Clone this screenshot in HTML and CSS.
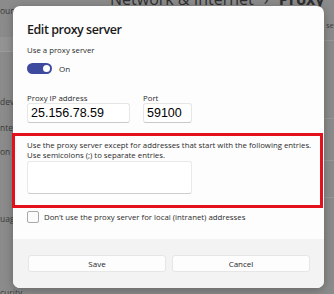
FILE: index.html
```html
<!DOCTYPE html>
<html>
<head>
<meta charset="utf-8">
<link rel="stylesheet" href="styles.css">
</head>
<body>
<div class="page">
  <nav class="nav">
    <div class="nav-item n-acc">ounts</div>
    <div class="nav-search"></div>
    <div class="nav-item n-dev">devices</div>
    <div class="nav-item n-net">nternet</div>
    <div class="nav-item n-pers">on</div>
    <div class="nav-item n-lang">uage</div>
    <div class="nav-item n-sec">curity</div>
  </nav>
  <main class="content">
    <h1 class="crumb">Network &amp; Internet <span class="sep">›</span> <b>Proxy</b></h1>
    <div class="intro">settings</div>
    <div class="card c1"></div>
    <div class="card c2"></div>
    <div class="card c3"></div>
    <div class="card c4"></div>
  </main>
</div>

<div class="dialog">
  <div class="dlg-body">
    <div class="dlg-title">Edit proxy server</div>
    <div class="label first">Use a proxy server</div>
    <div class="toggle-row">
      <span class="toggle"><span class="knob"></span></span>
      <span class="toggle-text">On</span>
    </div>
    <div class="fields">
      <div class="field">
        <div class="label">Proxy IP address</div>
        <div class="input ip">25.156.78.59</div>
      </div>
      <div class="field">
        <div class="label">Port</div>
        <div class="input port">59100</div>
      </div>
    </div>
    <div class="highlight">
      <div class="desc">Use the proxy server except for addresses that start with the following entries.<br>Use semicolons (;) to separate entries.</div>
      <div class="textarea"></div>
    </div>
    <div class="check-row">
      <span class="checkbox"></span>
      <span class="check-text">Don’t use the proxy server for local (intranet) addresses</span>
    </div>
  </div>
  <div class="dlg-footer">
    <button class="btn">Save</button>
    <button class="btn">Cancel</button>
  </div>
</div>
</body>
</html>
```
FILE: styles.css
```css
html, body {
  margin: 0;
  padding: 0;
}
body {
  width: 334px;
  height: 294px;
  overflow: hidden;
  position: relative;
  font-family: "Open Sans", "Noto Sans", sans-serif;
  background: #8b8b8b;
}
.page {
  display: grid;
  grid-template-columns: 60px minmax(0, 1fr);
  height: 294px;
  overflow: hidden;
  color: #333;
}
.nav {
  display: flex;
  flex-direction: column;
  font-size: 8.5px;
  white-space: nowrap;
  min-width: 0;
}
.nav-item {
  line-height: 24px;
  height: 24px;
  color: #3a3a3a;
}
.n-acc { margin-top: -1px; }
.nav-search {
  margin-top: 14px;
  height: 14px;
  background: #939393;
  border-bottom: 1px solid #9c9c9c;
}
.n-dev { margin-top: 38px; }
.n-net { margin-top: 2px; }
.n-lang { margin-top: 43px; }
.n-sec { margin-top: 50px; }

.content {
  display: flex;
  flex-direction: column;
  align-items: flex-start;
  white-space: nowrap;
  min-width: 0;
}
.crumb {
  margin: -9px 0 0 50px;
  font-size: 16px;
  line-height: 16px;
  height: 16px;
  font-weight: 400;
  color: #2e2e2e;
  flex: none;
}
.crumb b { font-weight: 700; }
.crumb .sep { margin: 0 6px; }
.intro {
  margin: 13px 0 0 266px;
  font-size: 7.5px;
  line-height: 10px;
  color: #3f3f3f;
}
.card {
  align-self: stretch;
  border-top: 1px solid #979797;
  margin-left: 20px;
}
.c1 { margin-top: 10px; height: 77px; }
.c2 { height: 41px; }
.c3 { height: 36px; }
.c4 { height: 96px; }

/* dialog overlay */
.dialog {
  position: absolute;
  left: 13px;
  top: 6px;
  width: 311px;
  height: 282px;
  background: #fdfdfd;
  border-radius: 7px;
  box-shadow: 0 2px 10px rgba(0, 0, 0, 0.28);
  display: flex;
  flex-direction: column;
  color: #1b1b1b;
}
.dlg-body {
  height: 233px;
  padding: 0 14px;
  box-sizing: border-box;
  display: flex;
  flex-direction: column;
}
.dlg-title {
  margin-top: 16px;
  font-size: 12.5px;
  line-height: 16px;
  font-weight: 600;
  letter-spacing: -0.45px;
}
.label {
  font-size: 7.8px;
  line-height: 10px;
  color: #2b2b2b;
}
.label.first { margin-top: 7px; }
.toggle-row {
  margin-top: 8px;
  height: 11px;
  display: flex;
  align-items: center;
  gap: 7px;
}
.toggle {
  width: 25px;
  height: 11px;
  border-radius: 6px;
  background: #3e4a9e;
  display: flex;
  align-items: center;
  justify-content: flex-end;
  padding-right: 2px;
  box-sizing: border-box;
}
.knob {
  width: 7px;
  height: 7px;
  border-radius: 50%;
  background: #fff;
}
.toggle-text {
  font-size: 8px;
  color: #2b2b2b;
}
.fields {
  margin-top: 19px;
  display: flex;
  gap: 13px;
}
.input {
  height: 20px;
  box-sizing: border-box;
  background: #fff;
  border: 1px solid #e6e6e6;
  border-bottom-color: #c9c9c9;
  border-radius: 3px;
  font-family: "Liberation Sans", Arial, sans-serif;
  font-size: 12.5px;
  line-height: 19px;
  padding-left: 3px;
  color: #000;
}
.ip { width: 103px; }
.port { width: 49px; }
.highlight {
  margin: 10px -13px 0 -15px;
  border: 3px solid #e3111b;
  padding: 4px 0 11px 12px;
}
.desc {
  font-size: 7.8px;
  line-height: 10px;
  color: #2b2b2b;
  white-space: nowrap;
}
.textarea {
  margin-top: 1px;
  width: 165px;
  height: 33px;
  box-sizing: border-box;
  background: #fff;
  border: 1px solid #e9e9e9;
  border-bottom-color: #cdcdcd;
  border-radius: 3px;
}
.check-row {
  margin-top: 3px;
  display: flex;
  align-items: center;
  gap: 5px;
  height: 12px;
}
.checkbox {
  width: 12px;
  height: 12px;
  box-sizing: border-box;
  border: 1px solid #a9a9a9;
  border-radius: 2px;
  background: #fbfbfb;
}
.check-text {
  font-size: 7.8px;
  color: #2b2b2b;
}
.dlg-footer {
  flex: 1;
  background: #f3f3f3;
  border-radius: 0 0 7px 7px;
  display: flex;
  gap: 6px;
  padding: 16px 14px 0 15px;
  box-sizing: border-box;
  align-items: flex-start;
}
.btn {
  flex: 1;
  height: 17px;
  margin: 0;
  padding: 0;
  background: #fdfdfd;
  border: 1px solid #e6e6e6;
  border-radius: 3px;
  font-family: inherit;
  font-size: 8px;
  color: #1f1f1f;
}
```
